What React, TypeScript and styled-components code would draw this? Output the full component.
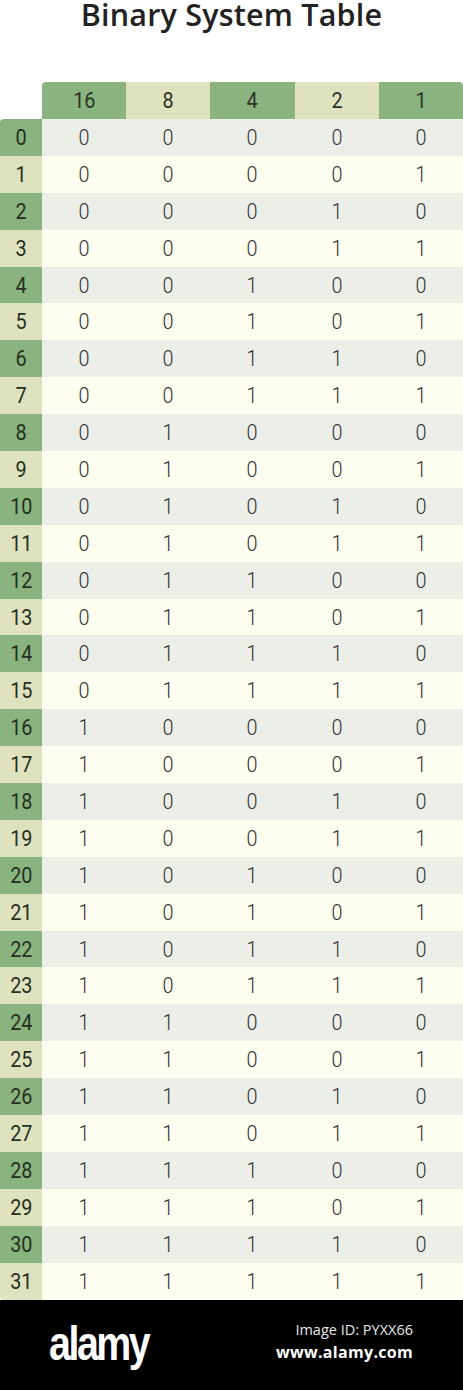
import styled, { createGlobalStyle } from "styled-components";

const GlobalStyle = createGlobalStyle`
  html, body {
    margin: 0;
    padding: 0;
    background: #ffffff;
  }
  body {
    width: 463px;
    overflow: hidden;
  }
`;

const GREEN = "#8ab380";
const PALE = "#dfe2bf";

const Page = styled.div`
  width: 463px;
  height: 1390px;
  display: flex;
  flex-direction: column;
  background: #ffffff;
  overflow: hidden;
`;

const Title = styled.h1`
  margin: 0;
  height: 82px;
  text-align: center;
  font-family: "Open Sans", sans-serif;
  font-weight: 600;
  font-size: 30.5px;
  line-height: 29px;
  color: #222222;
  letter-spacing: 0.2px;
`;

const Grid = styled.div`
  display: grid;
  grid-template-columns: 42px repeat(5, 1fr);
  grid-template-rows: 37px repeat(32, 36.9px);
`;

const Corner = styled.div`
  background: #ffffff;
`;

const Digits = styled.span`
  display: inline-block;
  transform: scaleX(0.9);
`;

const HeadCell = styled.div<{ $green: boolean; $first?: boolean; $last?: boolean }>`
  display: flex;
  align-items: center;
  justify-content: center;
  background: ${({ $green }) => ($green ? GREEN : PALE)};
  border-top-left-radius: ${({ $first }) => ($first ? "4px" : "0")};
  border-top-right-radius: ${({ $last }) => ($last ? "4px" : "0")};
  font-family: Roboto, sans-serif;
  font-weight: 400;
  font-size: 22px;
  color: #2c3328;
`;

const RowLabel = styled.div<{ $green: boolean; $first?: boolean; $last?: boolean }>`
  display: flex;
  align-items: center;
  justify-content: center;
  background: ${({ $green }) => ($green ? GREEN : PALE)};
  border-top-left-radius: ${({ $first }) => ($first ? "4px" : "0")};
  border-bottom-left-radius: ${({ $last }) => ($last ? "4px" : "0")};
  font-family: Roboto, sans-serif;
  font-weight: 400;
  font-size: 22px;
  color: #243020;
`;

const Cell = styled.div<{ $even: boolean }>`
  display: flex;
  align-items: center;
  justify-content: center;
  background: ${({ $even }) => ($even ? "#eceee8" : "#fdfef0")};
  font-family: Roboto, sans-serif;
  font-weight: 300;
  font-size: 22px;
  color: #333333;
`;

const Banner = styled.div`
  margin-top: auto;
  height: 90px;
  background: #000000;
  display: flex;
  align-items: center;
  justify-content: space-between;
  padding: 0 50px 0 49px;
`;

const Logo = styled.div`
  font-family: "Liberation Sans", Arial, sans-serif;
  font-weight: 700;
  font-size: 48px;
  letter-spacing: -3px;
  color: #ffffff;
  transform: scaleX(0.82);
  transform-origin: left center;
  margin-top: -4px;
`;

const Credit = styled.div`
  display: flex;
  flex-direction: column;
  align-items: flex-end;
  gap: 2px;
  color: #ffffff;
  font-family: "Open Sans", sans-serif;
  margin-top: -8px;
`;

const CreditId = styled.span`
  font-size: 14.5px;
  color: #e6e6e6;
`;

const CreditUrl = styled.span`
  font-size: 16px;
  font-weight: 700;
  letter-spacing: 0.3px;
`;

const weights = [16, 8, 4, 2, 1];

export default function App() {
  const rows = Array.from({ length: 32 }, (_, n) => n);
  return (
    <>
      <GlobalStyle />
      <Page>
        <Title>Binary System Table</Title>
        <Grid>
          <Corner />
          {weights.map((w, i) => (
            <HeadCell
              key={w}
              $green={i % 2 === 0}
              $first={i === 0}
              $last={i === weights.length - 1}
            >
              <Digits>{w}</Digits>
            </HeadCell>
          ))}
          {rows.map((n) => (
            <Row key={n} n={n} />
          ))}
        </Grid>
        <Banner>
          <Logo>alamy</Logo>
          <Credit>
            <CreditId>Image ID: PYXX66</CreditId>
            <CreditUrl>www.alamy.com</CreditUrl>
          </Credit>
        </Banner>
      </Page>
    </>
  );
}

function Row({ n }: { n: number }) {
  const even = n % 2 === 0;
  return (
    <>
      <RowLabel $green={even} $first={n === 0} $last={n === 31}>
        <Digits>{n}</Digits>
      </RowLabel>
      {weights.map((w) => (
        <Cell key={w} $even={even}>
          <Digits>{n & w ? 1 : 0}</Digits>
        </Cell>
      ))}
    </>
  );
}
